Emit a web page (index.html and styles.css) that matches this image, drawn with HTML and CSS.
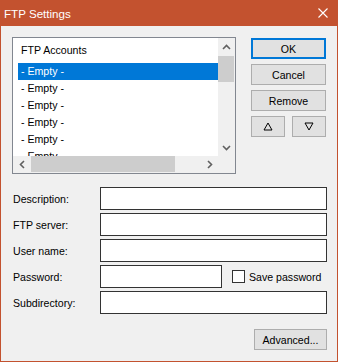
FILE: index.html
```html
<!DOCTYPE html>
<html>
<head>
<meta charset="utf-8">
<link rel="stylesheet" href="styles.css">
</head>
<body>
<div class="window">
  <div class="titlebar">
    <span class="title">FTP Settings</span>
    <svg class="close" width="10" height="10" viewBox="0 0 10 10"><path d="M0.5 0.5 L9.5 9.5 M9.5 0.5 L0.5 9.5" stroke="#fff" stroke-width="1.1" fill="none"/></svg>
  </div>
  <div class="content">
    <div class="top">
      <div class="listbox">
        <div class="list-area">
          <div class="list-header">FTP Accounts</div>
          <div class="row selected">- Empty -</div>
          <div class="row">- Empty -</div>
          <div class="row">- Empty -</div>
          <div class="row">- Empty -</div>
          <div class="row">- Empty -</div>
          <div class="row">- Empty -</div>
        </div>
        <div class="vscroll">
          <div class="sbtn"><svg width="9" height="6" viewBox="0 0 9 6"><path d="M1 5 L4.5 1.5 L8 5" stroke="#606060" stroke-width="1.6" fill="none"/></svg></div>
          <div class="vthumb"></div>
          <div class="vspace"></div>
          <div class="sbtn"><svg width="9" height="6" viewBox="0 0 9 6"><path d="M1 1 L4.5 4.5 L8 1" stroke="#606060" stroke-width="1.6" fill="none"/></svg></div>
        </div>
        <div class="hscroll">
          <div class="sbtn"><svg width="6" height="9" viewBox="0 0 6 9"><path d="M5 1 L1.5 4.5 L5 8" stroke="#606060" stroke-width="1.6" fill="none"/></svg></div>
          <div class="hthumb"></div>
          <div class="hspace"></div>
          <div class="sbtn"><svg width="6" height="9" viewBox="0 0 6 9"><path d="M1 1 L4.5 4.5 L1 8" stroke="#606060" stroke-width="1.6" fill="none"/></svg></div>
        </div>
        <div class="corner"></div>
      </div>
      <div class="buttons">
        <div class="btn default">OK</div>
        <div class="btn">Cancel</div>
        <div class="btn">Remove</div>
        <div class="arrows">
          <div class="btn small"><svg width="10" height="9" viewBox="0 0 10 9"><path d="M5 1 L9 8 L1 8 Z" stroke="#000" stroke-width="1" fill="none"/></svg></div>
          <div class="btn small"><svg width="10" height="9" viewBox="0 0 10 9"><path d="M1 1 L9 1 L5 8 Z" stroke="#000" stroke-width="1" fill="none"/></svg></div>
        </div>
      </div>
    </div>
    <div class="form">
      <label class="lbl">Description:</label>
      <div class="field"></div>
      <label class="lbl">FTP server:</label>
      <div class="field"></div>
      <label class="lbl">User name:</label>
      <div class="field"></div>
      <label class="lbl">Password:</label>
      <div class="pwrow">
        <div class="field pw"></div>
        <div class="check"></div>
        <span class="checklbl">Save password</span>
      </div>
      <label class="lbl">Subdirectory:</label>
      <div class="field"></div>
    </div>
    <div class="bottom">
      <div class="btn adv">Advanced...</div>
    </div>
  </div>
</div>
</body>
</html>
```
FILE: styles.css
```css
* { box-sizing: border-box; }
html, body { margin: 0; padding: 0; }
body {
  font-family: "Liberation Sans", Arial, sans-serif;
  font-size: 10.6px;
  color: #000;
  background: #f0f0f0;
}
.window {
  width: 338px;
  height: 362px;
  border: 1px solid #c3522f;
  border-top: 0;
  background: #f0f0f0;
  display: flex;
  flex-direction: column;
}
.titlebar {
  height: 26px;
  margin: 0 -1px;
  background: #c3522f;
  display: flex;
  align-items: center;
  justify-content: space-between;
  padding: 0 10px 0 4px;
  color: #fff;
}
.title { font-size: 11.6px; }
.close { display: block; }
.content {
  padding: 11px 10px 0 11px;
  display: flex;
  flex-direction: column;
}
.top { display: flex; gap: 15px; }
.listbox {
  width: 224px;
  height: 137px;
  border: 1px solid #828790;
  display: grid;
  grid-template-columns: 205px 17px;
  grid-template-rows: 118px 17px;
  background: #fff;
}
.list-area { background: #fff; overflow: hidden; }
.list-header {
  height: 25px;
  line-height: 25px;
  padding-left: 8px;
}
.row {
  height: 17px;
  line-height: 17px;
  margin-left: 5px;
  padding-left: 3px;
}
.row.selected { background: #0078d7; color: #fff; }
.vscroll, .hscroll { background: #f0f0f0; display: flex; }
.vscroll { flex-direction: column; }
.sbtn {
  width: 17px;
  height: 17px;
  display: flex;
  align-items: center;
  justify-content: center;
  flex: none;
}
.sbtn svg { display: block; }
.vthumb { margin: 1px 1px 0 0; height: 26px; background: #cdcdcd; flex: none; }
.vspace, .hspace { flex: 1; }
.hthumb { margin: 0 0 1px 1px; width: 144px; background: #cdcdcd; flex: none; }
.corner { background: #f0f0f0; }
.buttons {
  margin-top: 1px;
  display: flex;
  flex-direction: column;
  gap: 5px;
  width: 75px;
}
.btn {
  height: 21px;
  background: #e1e1e1;
  border: 1px solid #adadad;
  display: flex;
  align-items: center;
  justify-content: center;
}
.btn.default { border: 2px solid #0078d7; }
.arrows { display: flex; justify-content: space-between; }
.btn.small { width: 34px; }
.btn.small svg { display: block; }
.form {
  margin-top: 13px;
  margin-left: 1px;
  display: grid;
  grid-template-columns: 87px 227px;
  row-gap: 3px;
}
.lbl { display: flex; align-items: center; height: 23px; }
.field {
  height: 23px;
  background: #fff;
  border: 1px solid #333;
}
.pwrow { display: flex; align-items: center; }
.field.pw { width: 122px; }
.check {
  width: 13px;
  height: 13px;
  border: 1px solid #333;
  background: #fff;
  margin-left: 10px;
  margin-right: 4px;
}
.bottom { display: flex; justify-content: flex-end; margin-top: 15px; }
.btn.adv { width: 73px; }
```
